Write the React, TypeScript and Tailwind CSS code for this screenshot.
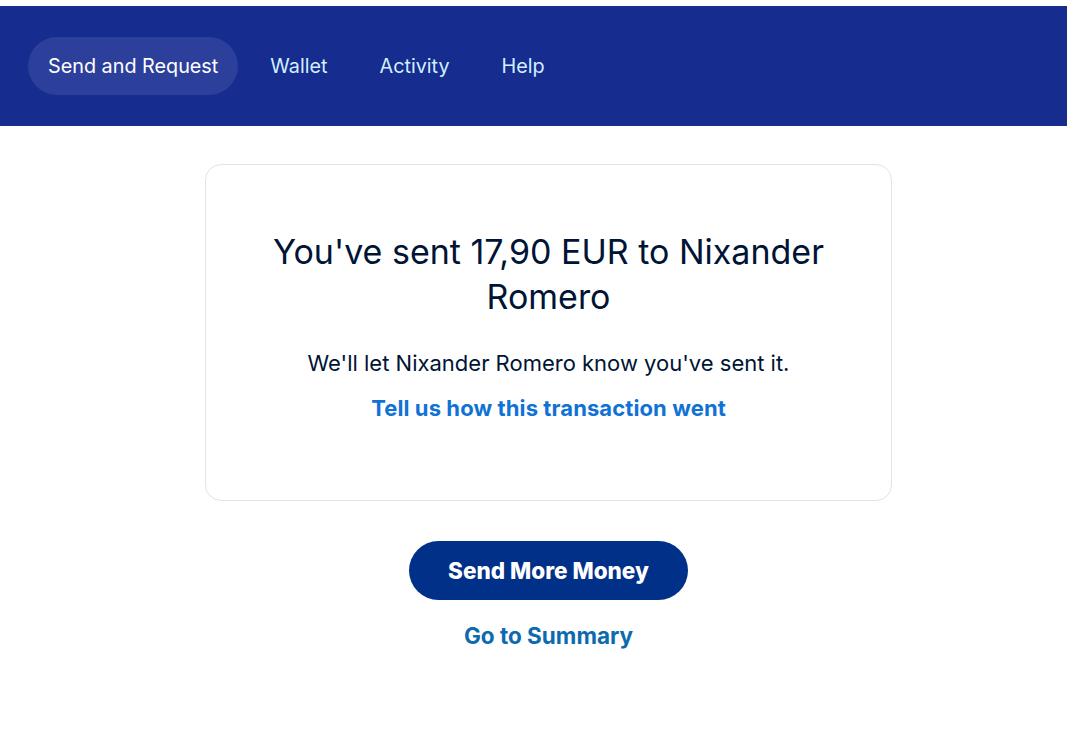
import React from "react";

export default function App() {
  const font = { fontFamily: "Inter, 'Noto Sans', sans-serif" };
  return (
    <div className="min-h-[738px] bg-white pt-[6px]" style={font}>
      <nav className="h-[120px] bg-[#162c8e] flex items-center pl-[28px] gap-3">
        <a className="h-[58px] flex items-center px-5 pt-[1px] rounded-full bg-[#2c409b] text-white text-[19.8px]">Send and Request</a>
        <a className="h-[58px] flex items-center px-5 pt-[1px] rounded-full text-[#d2efff] text-[19.8px]">Wallet</a>
        <a className="h-[58px] flex items-center px-5 pt-[1px] rounded-full text-[#d2efff] text-[19.8px]">Activity</a>
        <a className="h-[58px] flex items-center px-5 pt-[1px] rounded-full text-[#d2efff] text-[19.8px]">Help</a>
      </nav>
      <main className="flex flex-col items-center pt-[38px] pl-[30px]">
        <div className="w-[687px] h-[337px] border border-[#e3e3e3] rounded-[16px] flex flex-col items-center pt-[64px] px-[56px]">
          <h1 className="text-[34px] leading-[45px] text-center text-[#001435]">You've sent 17,90 EUR to Nixander Romero</h1>
          <p className="mt-[30px] text-[22px] leading-[28px] text-[#001435]">We'll let Nixander Romero know you've sent it.</p>
          <a className="mt-[17px] text-[22px] leading-[28px] font-bold text-[#1072d4] tracking-[0.1px]">Tell us how this transaction went</a>
        </div>
        <button className="mt-[40px] w-[279px] h-[59px] rounded-full bg-[#003087] text-white text-[22.5px] font-extrabold">Send More Money</button>
        <a className="mt-[21px] text-[22.5px] leading-[30px] font-bold text-[#0d6aaf]">Go to Summary</a>
      </main>
    </div>
  );
}
